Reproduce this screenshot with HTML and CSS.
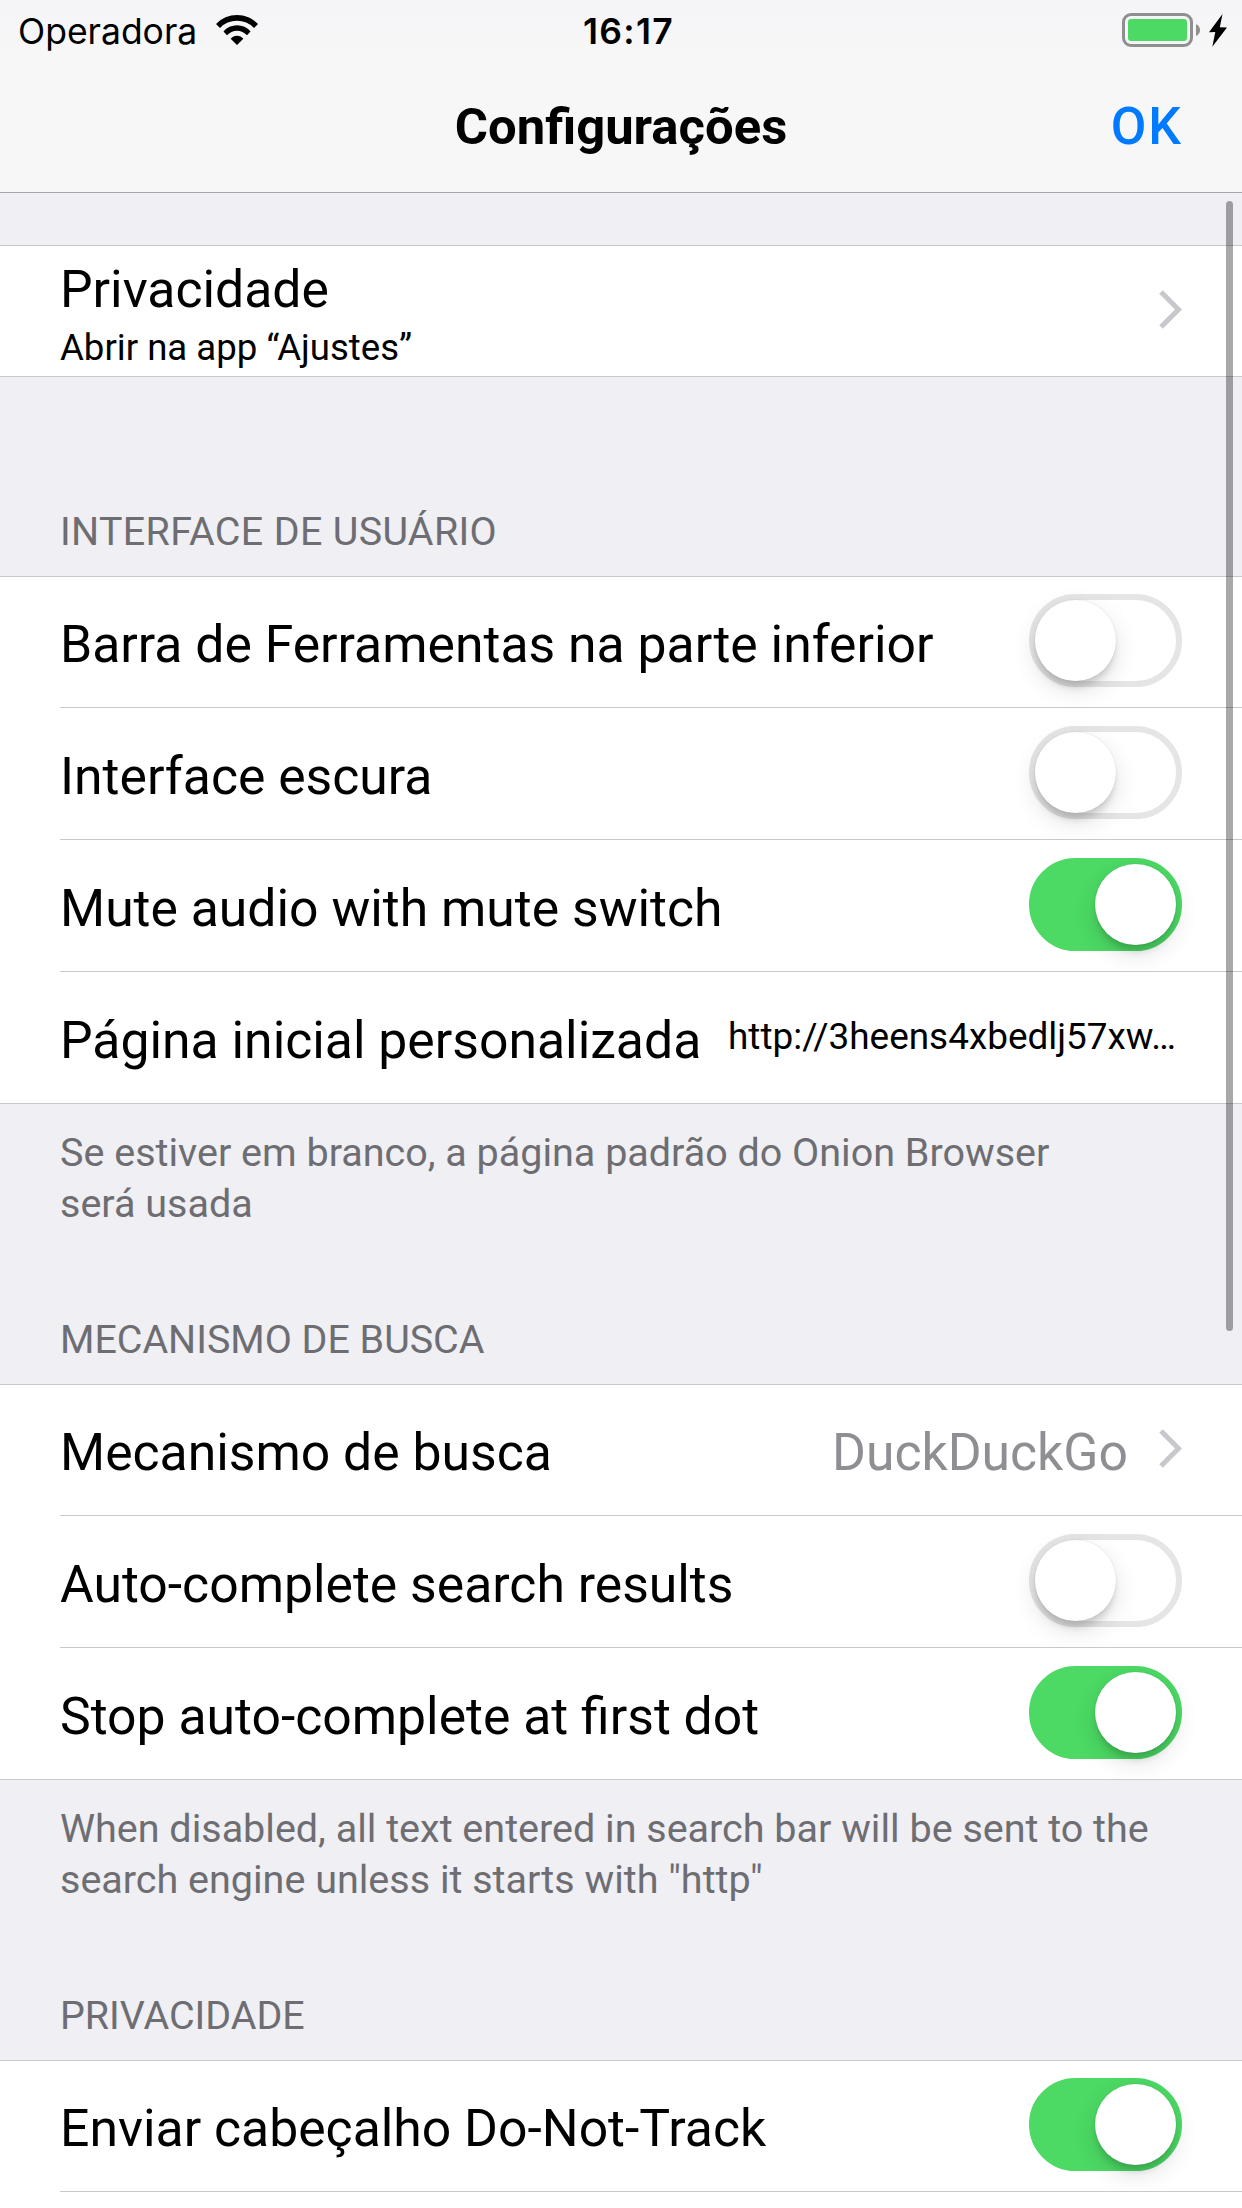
FILE: index.html
```html
<!DOCTYPE html>
<html lang="pt">
<head>
<meta charset="utf-8">
<title>Configurações</title>
<link rel="stylesheet" href="styles.css">
</head>
<body>
<header class="top">
  <div class="status">
    <span class="carrier">Operadora</span>
    <svg class="wifi" viewBox="0 0 42 30"><path d="M0 9A29 29 0 0 1 42 9L38 13A23.400 23.400 0 0 0 4 13ZM7.500 16.500A17.500 17.500 0 0 1 34.500 16.500L31 20.300A13.500 13.500 0 0 0 11 20.300ZM14.700 23.800A8 8 0 0 1 27.300 23.800L21 30Z"/></svg>
    <span class="time">16:17</span>
    <svg class="battery" viewBox="0 0 106 34"><rect x="1.500" y="1.500" width="68" height="31" rx="7.500" fill="none" stroke="#8f8f8f" stroke-width="3"/><rect x="6" y="6" width="59" height="22" rx="3" fill="#4cd964"/><path d="M74 11q4 2 4 6t-4 6z" fill="#8f8f8f"/><path d="M100.500 1L87 19.200l6.300-.2-3 14.800L105 14.500l-7.200-.3z"/></svg>
  </div>
  <div class="nav"><h1>Configurações</h1><span class="ok">OK</span></div>
</header>
<main class="list">
  <section class="group first">
    <div class="row"><div class="stack"><div class="label">Privacidade</div><div class="sub">Abrir na app “Ajustes”</div></div><svg class="chevron" viewBox="0 0 23 39"><path d="M2 2l17.500 17.500L2 37"/></svg></div>
  </section>
  <h2 class="head h-ui">INTERFACE DE USUÁRIO</h2>
  <section class="group">
    <div class="row"><span class="label">Barra de Ferramentas na parte inferior</span><i class="switch"></i></div>
    <div class="row"><span class="label">Interface escura</span><i class="switch"></i></div>
    <div class="row"><span class="label">Mute audio with mute switch</span><i class="switch on"></i></div>
    <div class="row"><span class="label">Página inicial personalizada</span><span class="url">http://3heens4xbedlj57xw…</span></div>
  </section>
  <p class="foot">Se estiver em branco, a página padrão do Onion Browser<br>será usada</p>
  <h2 class="head">MECANISMO DE BUSCA</h2>
  <section class="group">
    <div class="row"><span class="label">Mecanismo de busca</span><span class="label value">DuckDuckGo</span><svg class="chevron" viewBox="0 0 23 39"><path d="M2 2l17.500 17.500L2 37"/></svg></div>
    <div class="row"><span class="label">Auto-complete search results</span><i class="switch"></i></div>
    <div class="row"><span class="label">Stop auto-complete at first dot</span><i class="switch on"></i></div>
  </section>
  <p class="foot">When disabled, all text entered in search bar will be sent to the<br>search engine unless it starts with "http"</p>
  <h2 class="head">PRIVACIDADE</h2>
  <section class="group open">
    <div class="row"><span class="label">Enviar cabeçalho Do-Not-Track</span><i class="switch on"></i></div>
  </section>
</main>
<div class="scrollbar"></div>
</body>
</html>
```
FILE: styles.css
```css
* { box-sizing: border-box; }
body { margin: 0; height: 2208px; overflow: hidden; position: relative; background: #efeff4; font-family: Roboto, "Liberation Sans", sans-serif; color: #000; }
h1, h2, p { margin: 0; font-weight: 400; }
.top { height: 193px; background: linear-gradient(#f5f5f8, #f7f7f7 60px); border-bottom: 1px solid #a7a7aa; }
.status { height: 60px; display: grid; grid-template-columns: 198px 42px 1fr 106px; align-items: center; padding: 0 14px 0 18px; position: relative; font-family: Inter, sans-serif; font-size: 35.5px; }
.carrier, .time { padding-top: 2px; }
.wifi { width: 42px; height: 30px; }
.time { position: absolute; left: 0; right: 0; padding-left: 15px; text-align: center; font-weight: 600; letter-spacing: 1.3px; }
.battery { width: 106px; height: 34px; grid-column: 4; }
.nav { height: 132px; display: grid; grid-template-columns: 1fr auto 1fr; align-items: center; padding: 0 60px; }
h1 { grid-column: 2; font-size: 50.8px; font-weight: 700; }
.ok { justify-self: end; font-size: 51.7px; font-weight: 500; letter-spacing: 2px; margin-right: -1px; color: #007aff; }
.group { background: #fff; border-top: 1px solid #c8c7cc; border-bottom: 1px solid #c8c7cc; }
.first { margin-top: 52px; }
/* Labels and controls sit at fixed distances above each row's hairline. */
.row { height: 132px; margin-left: 60px; padding-right: 60px; display: flex; align-items: flex-end; justify-content: space-between; border-bottom: 1px solid #c8c7cc; }
.row:first-child { height: 131px; }
.row:last-child { height: 131px; border-bottom: 0; }
.row:only-child { height: 130px; }
/* The final group continues below the fold. */
.open { height: 148px; border-bottom: 0; }
.open .row { height: 131px; border-bottom: 1px solid #c8c7cc; }
.label { margin-bottom: 32px; font-size: 51.7px; line-height: 60px; white-space: nowrap; }
.stack { margin-bottom: 6px; }
.stack .label { margin-bottom: 6px; }
.sub { font-size: 36.6px; line-height: 44px; }
.chevron { width: 23px; height: 39px; margin-bottom: 47px; fill: none; stroke: #c7c7cc; stroke-width: 5; }
.head { height: 155px; display: flex; align-items: flex-end; padding: 0 60px 21px; font-size: 39.4px; line-height: 46px; color: #6d6d72; }
.h-ui { height: 199px; letter-spacing: .35px; }
.foot { padding: 23px 60px 0; font-size: 39.5px; line-height: 51px; color: #6d6d72; }
.url { margin: 0 6px 44px 0; font-size: 36.9px; line-height: 44px; }
.value { margin-left: auto; margin-right: 31px; color: #8e8e93; }
.switch { width: 153px; height: 93px; margin-bottom: 20px; border-radius: 47px; border: 6px solid #e5e5e5; display: flex; }
.switch::before { content: ""; width: 81px; height: 81px; border-radius: 50%; background: #fff; box-shadow: 0 9px 24px rgba(0,0,0,.12), 0 8px 7px -2px rgba(0,0,0,.14), 0 0 2px rgba(0,0,0,.12); }
.on { background: #4cd964; border-color: #4cd964; justify-content: flex-end; }
.scrollbar { position: absolute; left: 1226px; top: 201px; width: 7px; height: 1130px; border-radius: 4px; background: rgba(0,0,0,.34); }
```
